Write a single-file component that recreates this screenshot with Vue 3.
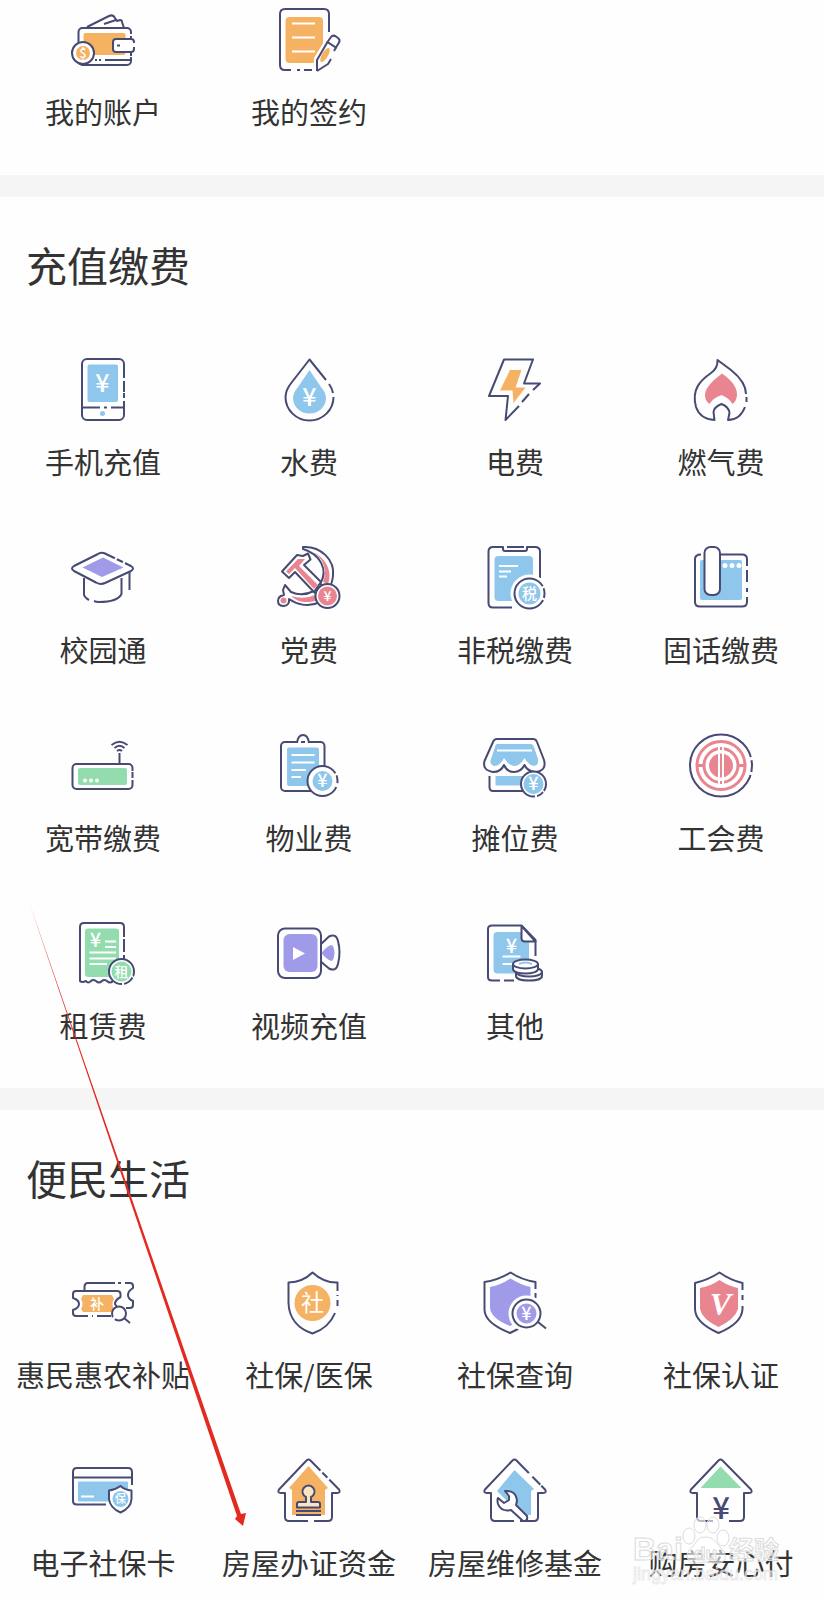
<script setup>
const house = '<path class="k" d="M33.500 1.500L62 30.500Q64 34 60 34H55V58Q55 62 51 62H37M31 62H12Q8 62 8 58V34H4Q0 34 2 30.500L29.500 1.500Q31.500-.500 33.500 1.500"/>'

// 64x64 line icons
const icons = {
  wallet: `
    <path class="k" d="M16 19L38 8Q42 6 44 10L46 13L49 12Q51 12 51 14L53 20"/>
    <path class="l" d="M33 16L45 12"/>
    <rect class="k" x="7.500" y="20" width="52.500" height="37" rx="4"/>
    <rect class="o" x="12.500" y="25" width="42" height="22" rx="2"/>
    <path class="l" d="M24 52H26M28 52H30M34 52H59"/>
    <path class="h" d="M60 26V28M60 48V49"/>
    <rect class="k" x="42" y="31" width="21" height="13" rx="3"/>
    <path class="l" d="M46 37.500H49"/>
    <path class="h" d="M63 35V39"/>
    <circle class="k" cx="12" cy="45" r="11"/>
    <circle class="o" cx="12" cy="45" r="7"/>
    <text class="t" x="12" y="49.500" font-size="13">$</text>`,
  sign: `
    <path class="l" d="M52 24V6Q52 1 47 1H8Q3 1 3 6V57Q3 62 8 62H14M20 62H23M27 62H35"/>
    <rect class="o" x="8.500" y="9" width="37.500" height="46" rx="4"/>
    <path class="w" d="M15 15.500H38M15 29.500H38M15 43.500H38"/>
    <path class="h fat" d="M40 62L41 51L55 28L61 33"/>
    <path class="k" d="M40 63L40 52L50.500 34L59 39.500L57 43M54 51L51 56L40 63"/>
    <path class="k" d="M50.500 34L54 29Q56 26.500 59 28.500L61 30Q63.500 32 62 34.500L59 39.500Z"/>
    <ellipse class="o" cx="48" cy="47" rx="3" ry="8" transform="rotate(30 48 47)"/>`,
  phone: `
    <rect class="k" x="11" y="1" width="42" height="61" rx="5"/>
    <rect class="b" x="16.500" y="6.500" width="30.500" height="37.500" rx="2"/>
    <path class="l" d="M11 49.500H29M33 49.500H36M40 49.500H53"/>
    <path class="h" d="M53 20V23M53 34V35M53 40V43"/>
    <circle class="b" cx="31.500" cy="55.500" r="2.500"/>
    <text class="t" x="31.500" y="34" font-size="25">¥</text>`,
  water: `
    <path class="l" d="M49 22L32.500 1.500L15 24Q8.500 32 8.500 39A24 23.500 0 0 0 56.500 39M52 26Q55 30 56 35"/>
    <path class="b" d="M32.500 12L21 29Q16 35 16 40A16.500 15.500 0 0 0 49 40Q49 35 44 29Z"/>
    <text class="t" x="32.500" y="48" font-size="25">¥</text>`,
  power: `
    <path class="l" d="M50 32L57 25.500H41L50 1.500H21L6 38H25L22.500 62L36 48M39 44L46 36"/>
    <path class="o" d="M27 12H38.500L32.500 29.500H42.500L30.500 45L29.500 32.500H17Z"/>`,
  gas: `
    <path class="l" d="M56 49Q51 62 39 62L40.500 55Q40 49 32.500 46Q25 49 24.500 54L25.500 62Q11 61 7 49C2 31 12 22 22 15Q29 10 28.500 2L42 12C52 20 57 28 57 36M57.500 39V44"/>
    <path class="p" d="M33 15.500C26 21 16 29 16 37Q16 43 20.500 46Q24 40 32.500 37Q40 40 43.500 46Q48 43 48 36C48 27 39 20 33 15.500Z"/>`,
  campus: `
    <path class="l" d="M13 32V49Q14 52 18 54M23 55Q25 56 28 56C40 56 48 53 50.500 48V32M58.500 26V44"/>
    <path class="k" d="M34 7.500L60 20Q64 22.500 60 25L34 37Q29.500 39 25 36.500L3 25Q-1 22.500 3 20L27 8Q30.500 6 34 7.500Z"/>
    <path class="h" d="M44 12L46 13M52 16L54 17"/>
    <path class="v" d="M32 11.500L52.500 21.500L31 31L11.500 21.500Z"/>`,
  party: `
    <path class="k" d="M26 1C44 0 58 14 56 30Q55 38 52 42L43 38C52 24 43 8 26 3Z"/>
    <path class="p" d="M36 6C49 12 56 26 51 38L46 36C51 24 46 12 36 6Z"/>
    <path class="k" d="M8 39L14 46Q25 51 37 45L43 56C31 62 19 58 12 53Q13 59 7 60Q1 60 1 55Q1 50 7 49L6 44Z"/>
    <path class="p" d="M14 50Q27 54 38 49L41 54C30 58 20 56 14 50Z"/>
    <circle class="p" cx="6.500" cy="54.500" r="3"/>
    <path class="k" d="M5 25.500L20 9L26 10L31 7.500L33.500 13.500L27 19L44 36L37 46L18 26L12 32Z"/>
    <path class="p" d="M9 25.500L21 13L28 13L22 20L41 39L37 43L18 22L12 28Z"/>
    <circle class="k" cx="50.500" cy="50" r="12"/>
    <circle class="p" cx="50.500" cy="50" r="9.500"/>
    <text class="t" x="50.500" y="55" font-size="14">¥</text>`,
  tax: `
    <path class="l" d="M29 61.500H10Q5.500 61.500 5.500 57V5.500Q5.500 1 10 1H20V3Q20 5 22 5H42Q44 5 44 3V1H52Q57 1 57 5.500V32M24 1H41"/>
    <rect class="b" x="11.500" y="10" width="38.500" height="45" rx="4"/>
    <path class="w" d="M16 20H35M16 25.500H28M16 30.500H24"/>
    <circle class="f" cx="46.500" cy="47.500" r="19"/>
    <circle class="k" cx="46.500" cy="47.500" r="15"/>
    <path class="h" d="M60 40L61 42M61 52L60 54"/>
    <circle class="b" cx="46.500" cy="47.500" r="11"/>
    <text class="t" x="46.500" y="53" font-size="15">税</text>`,
  landline: `
    <path class="l" d="M32 8.500H53Q58 8.500 58 13V20M58 24V36M58 42V46M58 51V56Q58 60.500 53 60.500H11Q6 60.500 6 56V13Q6 8.500 12 8.500"/>
    <rect class="b" x="11" y="14" width="42" height="40" rx="2"/>
    <rect class="k" x="15.500" y="1" width="15.500" height="48" rx="6"/>
    <circle class="f" cx="36" cy="19.500" r="2.500"/>
    <circle class="f" cx="43" cy="19.500" r="2.500"/>
    <circle class="f" cx="50" cy="19.500" r="2.500"/>`,
  router: `
    <rect class="k" x="1.500" y="30" width="60" height="25" rx="4"/>
    <rect class="g" x="7" y="34" width="49" height="17" rx="2"/>
    <path class="h" d="M61.500 37V38M61.500 44V46"/>
    <circle class="f" cx="14" cy="46.500" r="2"/>
    <circle class="f" cx="20" cy="46.500" r="2"/>
    <circle class="f" cx="26" cy="46.500" r="2"/>
    <path class="l" d="M48.500 19V30M40.500 11Q48.500 4.500 56.500 11M43.500 14Q48.500 9.500 53.500 14M46 17Q48.500 15 51 17"/>`,
  property: `
    <rect class="k" x="4" y="8" width="43.500" height="49" rx="4"/>
    <path class="k" d="M20 9Q21 1 26 1Q31 1 32 9"/>
    <path class="l" d="M24 8H28"/>
    <rect class="b" x="10" y="13.500" width="32" height="38.500" rx="2"/>
    <path class="w" d="M14.500 21H37.500M14.500 28.500H37.500M14.500 36H29M14.500 43H24"/>
    <circle class="k" cx="45.500" cy="47" r="15"/>
    <path class="h" d="M59 39L60 41M60 49L59 53"/>
    <circle class="b" cx="45.500" cy="47" r="10"/>
    <text class="t" x="45.500" y="53" font-size="18">¥</text>`,
  stall: `
    <path class="l" d="M6.500 42V53Q6.500 57 10 57H40"/>
    <rect class="b" x="12.500" y="42" width="28" height="9.500" rx="1"/>
    <path class="k" d="M14 5H50Q53 5 54 8L61 26Q64 37 52 38Q44 37 41.500 31Q38 38 31 38Q24 38 21 31Q18 38 10 38Q-1 36 1.500 27L10 8Q11 5 14 5Z"/>
    <path class="b" d="M14 10H48Q50 10 51 13L55 25Q56 31 51 32Q45 31 41.500 24Q37 32 31 32Q25 31 21 24Q17 32 11 32Q6 30 8 25L12 13Q12.500 10 14 10Z"/>
    <path class="w" d="M14 16.500H49"/>
    <circle class="k" cx="50.500" cy="50" r="12.500"/>
    <path class="h" d="M52 62.500H54M61 57L60 58"/>
    <circle class="b" cx="50.500" cy="50" r="10"/>
    <text class="t" x="50.500" y="56" font-size="18">¥</text>`,
  union: `
    <circle class="k" cx="32" cy="31.500" r="31"/>
    <path class="h" d="M62 23L63 26M62.500 38L62 41"/>
    <circle class="pl" cx="32" cy="31.500" r="24"/>
    <circle class="pl" cx="32" cy="31.500" r="17"/>
    <path class="pl" d="M8 31.500H15M49 31.500H56"/>
    <circle class="p" cx="32" cy="31.500" r="12"/>
    <path class="w" d="M30 13V50M34 13V50"/>`,
  rent: `
    <path class="k" d="M9 59V5Q9 1 13 1H49Q53 1 53 5V59Q49 62 47 59Q44 57 42 59Q39 62 36 59Q33 57 31 59Q28 62 25 59Q22 57 20 59Q17 62 15 59Q11 61 9 59Z"/>
    <path class="h" d="M53 15V17M53 30V33"/>
    <rect class="g" x="14" y="6.500" width="34" height="48.500" rx="3"/>
    <path class="w" d="M34 19.500H45M34 25H45M18.500 30.500H45M18.500 36.500H45M18.500 42H36"/>
    <text class="t" x="24.500" y="25" font-size="20">¥</text>
    <circle class="k" cx="50.500" cy="49.500" r="12.500"/>
    <path class="h" d="M51 62H53M62 54L61 55"/>
    <circle class="g" cx="50.500" cy="49.500" r="10"/>
    <text class="t" x="50.500" y="54.500" font-size="14">租</text>`,
  video: `
    <path class="k" d="M42 24L52 14.500Q59 11 61 19Q64 30 61 42Q59 50 52 46.500L42 38Z"/>
    <rect class="k" x="1" y="6.500" width="43" height="49.500" rx="7"/>
    <rect class="v" x="6.500" y="12" width="34" height="38" rx="6"/>
    <path class="f" d="M16 25L28 31.500L16 38Z"/>
    <path class="v" d="M44.500 31Q49 25 54 23Q57 23 57.500 31Q57 39 54 39Q49 37 44.500 31Z"/>`,
  other: `
    <path class="l" d="M17 58.500H9Q5 58.500 5 55V7Q5 3.500 9 3.500H38.500L52.500 18V34M21 58.500H31"/>
    <rect class="b" x="10.500" y="10" width="35.500" height="41.500" rx="4"/>
    <path class="k" d="M38.500 4V16Q38.500 19.500 42 19.500H52.500Z"/>
    <text class="t" x="28.500" y="30.500" font-size="20">¥</text>
    <path class="w" d="M19.500 34.500H37.500M19.500 42H29"/>
    <path class="k" d="M33 50V54C33 60 59 60 59 54V50"/>
    <ellipse class="k" cx="46" cy="50" rx="13" ry="4.500"/>
    <path class="k" d="M30 42V47C30 53 55 53 55 47V42"/>
    <ellipse class="k" cx="42.500" cy="42" rx="12.500" ry="4.500"/>
    <path class="bl" d="M36 42Q42 39 49 42"/>`,
  ticket: `
    <path class="l" d="M13.500 19V16Q13.500 12 17 12H44M47 12H50M54 12H59Q62 12 62 15V17Q57 20 57 24Q57 28 62 30V34Q62 37 59 37H55"/>
    <path class="l" d="M17 45H5Q2 45 2 42V39Q8 37 8 33Q8 29 2 27V23Q2 20 5 20H46Q49.500 20 49.500 23V26Q44 29 44 33L46 36M21 45H22M26 45H40"/>
    <path class="o" d="M12 24H41L43 28Q40 33 43 38L41 41H12L10 38Q13 33 10 28Z"/>
    <text class="t" x="26" y="38" font-size="14">补</text>
    <circle class="k" cx="48" cy="42.500" r="7"/>
    <path class="l" d="M53 47L59 52"/>
    <path class="h" d="M42 46L44 48"/>`,
  social: `
    <path class="l" d="M60.500 20V11.500Q47 12 35.500 1.500Q26 11 11.500 11.500V32C12 48 22 58 35.500 62.500C46 59 54 52 58 42M60.500 24V25M60.500 29V35"/>
    <circle class="o" cx="35.500" cy="32" r="18"/>
    <text class="t thin" x="35.500" y="40" font-size="23">社</text>`,
  query: `
    <path class="l" d="M52.500 18V11Q39 9 27.500 1.500Q15 9 1.500 11V39Q2 52 27 62L36 57.500M52.500 22V27"/>
    <path class="v" d="M27.500 7.500Q38 14 47.500 16V38Q44 48 27 55Q7 47 7 36V16Q18 14 27.500 7.500Z"/>
    <circle class="f" cx="43.500" cy="42.500" r="18"/>
    <circle class="k" cx="43.500" cy="42.500" r="14"/>
    <circle class="v" cx="43.500" cy="42.500" r="10"/>
    <text class="t" x="43.500" y="49" font-size="18">¥</text>
    <path class="l" d="M55 51L63 57.500"/>`,
  auth: `
    <path class="l" d="M53.500 19V12Q41 9 30.500 1.500Q19 9 6 12V38C6 49 16 56 29.500 62C44 56 53 49 53.500 38V35M53.500 24V29"/>
    <path class="p" d="M30.500 9Q39 15 49 17V38Q46 48 29.500 56Q13 48 11 38V17Q22 15 30.500 9Z"/>
    <text class="t v-mark" x="31.500" y="44" font-size="32">V</text>`,
  card: `
    <path class="l" d="M35 45.500H6Q2 45.500 2 42V13Q2 9 6 9H57Q61 9 61 13V26M2 18.500H61"/>
    <rect class="b" x="7" y="22.500" width="50" height="20" rx="1"/>
    <path class="w" d="M10 37.500H23"/>
    <path class="k" d="M49.500 27Q44 31 38 31.500V40Q39 49 49.500 53.500Q60 49 60.500 40V31.500Q54 31 49.500 27Z"/>
    <circle class="b" cx="49.500" cy="40" r="8"/>
    <text class="t" x="49.500" y="44" font-size="11">保</text>`,
  deed: `${house}
    <path class="o" d="M31.500 7L51 29L48 31V56H15V31L12 29Z"/>
    <path class="h" d="M43 12L45 14M50 19L52 21"/>
    <path class="pk" d="M29 38V43H22Q20 43 20 45V48.500H43V45Q43 43 41 43H34V38A6 6 0 1 0 29 38Z"/>
    <path class="l" d="M19 52H44M19 56H44"/>`,
  repair: `${house}
    <path class="b" d="M31.500 11L51 30L48 32V56H38L14 32Z"/>
    <path class="h" d="M46 14L49 18M57 26L58 27"/>
    <path class="k" d="M22 32Q33 31 34 42L33 46L44 57Q45 61 42 62H40L28 51Q18 53 15 45Q14 41 15 39L21 44L26 41V37Z"/>`,
  buy: `${house}
    <path class="g" d="M31.500 7.500L52.500 29H11.500Z"/>
    <path class="h" d="M24 62H40"/>
    <text class="t navy" x="32" y="60" font-size="31">¥</text>`
}

const sections = [
  {
    items: [
      { icon: 'wallet', label: '我的账户' },
      { icon: 'sign', label: '我的签约' }
    ]
  },
  {
    title: '充值缴费',
    items: [
      { icon: 'phone', label: '手机充值' },
      { icon: 'water', label: '水费' },
      { icon: 'power', label: '电费' },
      { icon: 'gas', label: '燃气费' },
      { icon: 'campus', label: '校园通' },
      { icon: 'party', label: '党费' },
      { icon: 'tax', label: '非税缴费' },
      { icon: 'landline', label: '固话缴费' },
      { icon: 'router', label: '宽带缴费' },
      { icon: 'property', label: '物业费' },
      { icon: 'stall', label: '摊位费' },
      { icon: 'union', label: '工会费' },
      { icon: 'rent', label: '租赁费' },
      { icon: 'video', label: '视频充值' },
      { icon: 'other', label: '其他' }
    ]
  },
  {
    title: '便民生活',
    items: [
      { icon: 'ticket', label: '惠民惠农补贴' },
      { icon: 'social', label: '社保/医保' },
      { icon: 'query', label: '社保查询' },
      { icon: 'auth', label: '社保认证' },
      { icon: 'card', label: '电子社保卡' },
      { icon: 'deed', label: '房屋办证资金' },
      { icon: 'repair', label: '房屋维修基金' },
      { icon: 'buy', label: '购房安心付' }
    ]
  }
]
</script>

<template>
  <main class="page">
    <section v-for="(section, i) in sections" :key="i" class="section">
      <h2 v-if="section.title" class="title">{{ section.title }}</h2>
      <ul class="grid">
        <li v-for="item in section.items" :key="item.label">
          <a href="#" class="item">
            <svg class="icon" viewBox="0 0 64 64" aria-hidden="true" v-html="icons[item.icon]"></svg>
            <span class="label">{{ item.label }}</span>
          </a>
        </li>
      </ul>
    </section>

    <svg class="arrow" viewBox="0 0 220 626" aria-hidden="true">
      <path d="M0 0L212 612L217 611L214 624L206 617L208 614Z" />
    </svg>

    <svg class="watermark" viewBox="0 0 150 76" aria-hidden="true">
      <g class="paw">
        <ellipse cx="57" cy="22" rx="6" ry="8" />
        <ellipse cx="68" cy="11" rx="6" ry="8" />
        <ellipse cx="81" cy="11" rx="6" ry="8" />
        <ellipse cx="91" cy="24" rx="6" ry="8" />
        <path d="M73 23C64 23 65 30 58 35C52 41 56 51 65 49Q74 47 83 49C94 51 96 41 90 35C84 30 83 23 73 23Z" />
      </g>
      <text class="brand" x="1" y="46" font-size="32">Bai</text>
      <text class="brand" x="62" y="46" font-size="19">du</text>
      <text class="brand" x="97" y="45" font-size="25">经验</text>
      <text class="site" x="1" y="66" font-size="18">jingyan.baidu.com</text>
    </svg>
  </main>
</template>

<style>
body {
  margin: 0;
  background-color: #fefefe;
}
</style>

<style scoped>
.page {
  position: relative;
  overflow: hidden;
  color: #333;
  font-family: "Noto Sans CJK SC", "Noto Sans", sans-serif;
}

.section {
  padding: 38px 0 41px;
}

.section:first-child {
  padding: 8px 0 42px;
}

.section:last-of-type {
  padding-bottom: 16px;
}

.section + .section {
  border-top: 22px solid #f5f5f5;
}

.title {
  margin: 0 0 65px;
  padding: 0 26px;
  font-size: 41px;
  font-weight: 400;
  line-height: 58px;
}

.grid {
  display: grid;
  grid-template-columns: repeat(4, 1fr);
  row-gap: 63px;
  margin: 0;
  padding: 0;
  list-style: none;
}

.item {
  display: flex;
  flex-direction: column;
  align-items: center;
  gap: 17px;
  color: inherit;
  text-decoration: none;
}

.icon {
  width: 64px;
  height: 64px;
  overflow: visible;
}

.label {
  font-size: 29px;
  line-height: 44px;
  white-space: nowrap;
}

/* icon strokes and fills */
.icon :deep(path),
.icon :deep(rect),
.icon :deep(circle),
.icon :deep(ellipse) {
  stroke-width: 2px;
  stroke-linejoin: round;
}

.icon :deep(.l) {
  fill: none;
  stroke: #474b73;
}

.icon :deep(.k) {
  fill: #fff;
  stroke: #474b73;
}

.icon :deep(.pk) {
  fill: #fbe3c6;
  stroke: #474b73;
}

.icon :deep(.h) {
  fill: none;
  stroke: #fefefe;
  stroke-width: 4px;
}

.icon :deep(.fat) {
  stroke-width: 8px;
}

.icon :deep(.w) {
  fill: none;
  stroke: #fff;
}

.icon :deep(.f) {
  fill: #fefefe;
}

.icon :deep(.o) {
  fill: #f5b263;
}

.icon :deep(.b) {
  fill: #8fc6ec;
}

.icon :deep(.bl) {
  fill: none;
  stroke: #8fc6ec;
}

.icon :deep(.p) {
  fill: #e98591;
}

.icon :deep(.pl) {
  fill: none;
  stroke: #e98591;
  stroke-width: 3px;
}

.icon :deep(.v) {
  fill: #a09be9;
}

.icon :deep(.g) {
  fill: #92dcae;
}

.icon :deep(.t) {
  fill: #fff;
  font-weight: 500;
  text-anchor: middle;
}

.icon :deep(.thin) {
  font-weight: 400;
}

.icon :deep(.navy) {
  fill: #474b73;
}

.icon :deep(.v-mark) {
  font-family: "Liberation Serif", serif;
  font-style: italic;
  font-weight: 700;
}

.arrow,
.watermark {
  position: absolute;
  pointer-events: none;
}

.arrow {
  top: 902px;
  left: 29px;
  width: 220px;
  height: 626px;
  fill: #e32a20;
}

.watermark {
  right: 42px;
  bottom: 10px;
  width: 150px;
  height: 76px;
}

.paw,
.brand,
.site {
  fill: #fff;
  fill-opacity: 0.6;
  stroke: #dcdcdc;
  stroke-width: 1px;
}

.brand {
  font-family: "Liberation Sans", "Noto Sans CJK SC", sans-serif;
  font-weight: 700;
}

.site {
  font-family: "Liberation Sans", sans-serif;
  stroke-opacity: 0.6;
}
</style>
